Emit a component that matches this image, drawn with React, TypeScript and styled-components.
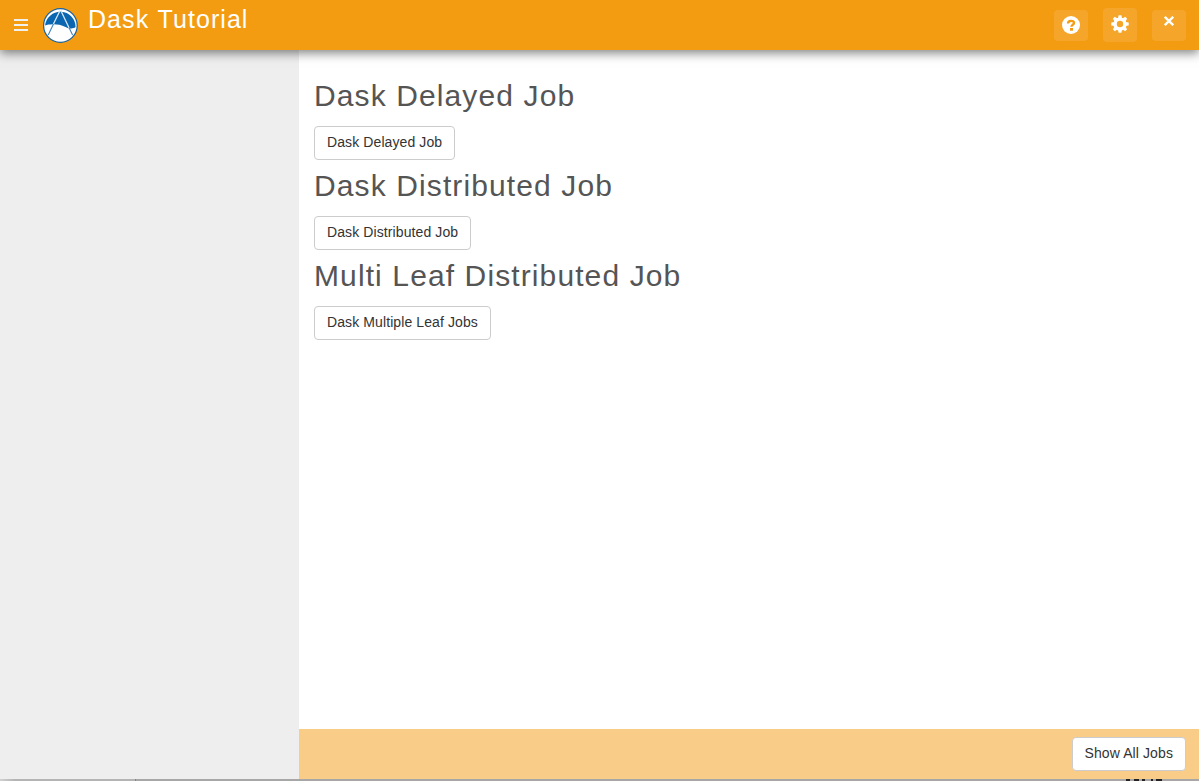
import React from 'react';
import styled, { createGlobalStyle } from 'styled-components';

const GlobalStyle = createGlobalStyle`
  * { box-sizing: border-box; }
  body {
    margin: 0;
    overflow: hidden;
    font-family: "Liberation Sans", Arial, sans-serif;
    font-size: 14px;
    color: #333;
    background: #fff;
  }
`;

const Window = styled.div`
  display: flex;
  flex-direction: column;
  width: 100%;
  height: 781px;
`;

const Header = styled.header`
  position: relative;
  z-index: 1;
  display: flex;
  flex: 0 0 50px;
  padding: 0 13px 0 14px;
  background: #f39c12;
  box-shadow: 0 3px 10px rgba(0, 0, 0, 0.5);
`;

const MenuButton = styled.div`
  display: flex;
  flex-direction: column;
  justify-content: space-between;
  width: 14px;
  height: 12px;
  margin-top: 19px;
`;

const MenuLine = styled.span`
  height: 2px;
  background: #f0f0ee;
`;

const Logo = styled.svg`
  width: 36px;
  height: 36px;
  margin: 7px 0 0 14px;
`;

const Title = styled.h1`
  flex: 1;
  margin: 5px 0 0 10px;
  font-size: 25px;
  font-weight: 400;
  line-height: 28px;
  letter-spacing: 1.06px;
  word-spacing: 0.8px;
  color: #fff;
`;

const Tools = styled.div`
  display: flex;
  align-items: center;
  gap: 15px;
`;

const ToolButton = styled.button<{ $height: number; $lift?: number }>`
  display: flex;
  align-items: center;
  justify-content: center;
  width: 34px;
  height: ${(p) => p.$height}px;
  padding: 0 0 ${(p) => p.$lift ?? 0}px;
  border: 0;
  border-radius: 4px;
  background: #f5a62a;
  color: #fff;
`;

const Body = styled.div`
  display: flex;
  flex: 1;
`;

const Sidebar = styled.aside`
  width: 299px;
  background: #eee;
`;

const Main = styled.main`
  display: flex;
  flex: 1;
  flex-direction: column;
`;

const Content = styled.section`
  flex: 1;
  padding: 29px 15px 0;
`;

const Job = styled.div`
  height: 90px;
`;

const JobTitle = styled.h2`
  margin: 0 0 14px;
  font-size: 30px;
  font-weight: 400;
  line-height: 33px;
  letter-spacing: 1.11px;
  color: #555;
`;

const Button = styled.button`
  display: block;
  height: 34px;
  padding: 5px 12px 7px;
  border: 1px solid #ccc;
  border-radius: 4px;
  background: #fff;
  font-family: inherit;
  font-size: 14px;
  line-height: 20px;
  letter-spacing: 0.1px;
  white-space: nowrap;
  color: #333;
`;

const Footer = styled.footer`
  display: flex;
  flex: 0 0 50px;
  justify-content: flex-end;
  padding: 8px 13px 0;
  background: #f9cd88;
`;

const BottomEdge = styled.div`
  display: flex;
  flex: 0 0 2px;
  background: #a7a7a7;
`;

const EdgeShade = styled.div`
  width: 136px;
  border-right: 1px solid #858585;
  background: linear-gradient(90deg, #d0d0d0, #b4b4b4 15px);
`;

const EdgeMarks = styled.svg`
  width: 40px;
  height: 2px;
  margin: 0 36px 0 auto;
`;

const jobs = [
  { title: 'Dask Delayed Job', action: 'Dask Delayed Job' },
  { title: 'Dask Distributed Job', action: 'Dask Distributed Job' },
  { title: 'Multi Leaf Distributed Job', action: 'Dask Multiple Leaf Jobs' },
];

const teeth = [0, 45, 90, 135, 180, 225, 270, 315];

const BrandMark = () => (
  <Logo viewBox="0 0 36 36">
    <circle cx="18.4" cy="18.5" r="17.4" fill="#1762a3" />
    <circle cx="18.4" cy="18.5" r="16.2" fill="#fff" />
    <path d="M3.1 18.4A15.3 15.3 0 0 1 33.6 20C31 22 27.5 21.8 23.5 19.9C19 17.6 14 17 10.5 17.2C7.5 17.4 5 17.6 3.1 18.4Z" fill="#0a66b0" />
    <path d="M17.8 4L6.2 28M19 4L30.6 28" stroke="#3f85bd" strokeWidth="1.1" fill="none" />
    <path d="M17.8 4L11.4 17.1M19 4L27 20.8" stroke="#dbe8f3" strokeWidth="1.2" fill="none" />
  </Logo>
);

const HelpIcon = () => (
  <svg width="18" height="18" viewBox="0 0 18 18">
    <circle cx="9" cy="9" r="9" fill="#fff" />
    <path d="M6 7.4C6 4.2 12 4 12 7C12 8.8 9.4 8.6 9.4 10.8" fill="none" stroke="#f39c12" strokeWidth="2.3" />
    <rect x="8" y="12" width="3" height="2.7" fill="#f39c12" />
  </svg>
);

const GearIcon = () => (
  <svg width="18" height="18" viewBox="0 0 18 18">
    {teeth.map((angle) => (
      <path key={angle} d="M6.9 4L7.6 .3H10.4L11.1 4Z" fill="#fff" transform={`rotate(${angle} 9 9)`} />
    ))}
    <circle cx="9" cy="9" r="4.9" fill="none" stroke="#fff" strokeWidth="3.4" />
  </svg>
);

const CloseIcon = () => (
  <svg width="10" height="10" viewBox="0 0 10 10">
    <path d="M.8 .8L9.2 9.2M9.2 .8L.8 9.2" stroke="#fff" strokeWidth="2.3" />
  </svg>
);

export default function App() {
  return (
    <>
      <GlobalStyle />
      <Window>
        <Header>
          <MenuButton>
            <MenuLine />
            <MenuLine />
            <MenuLine />
          </MenuButton>
          <BrandMark />
          <Title>Dask Tutorial</Title>
          <Tools>
            <ToolButton $height={31} aria-label="Help"><HelpIcon /></ToolButton>
            <ToolButton $height={34} $lift={2} aria-label="Settings"><GearIcon /></ToolButton>
            <ToolButton $height={31} $lift={9} aria-label="Close"><CloseIcon /></ToolButton>
          </Tools>
        </Header>
        <Body>
          <Sidebar />
          <Main>
            <Content>
              {jobs.map((job) => (
                <Job key={job.title}>
                  <JobTitle>{job.title}</JobTitle>
                  <Button>{job.action}</Button>
                </Job>
              ))}
            </Content>
            <Footer>
              <Button>Show All Jobs</Button>
            </Footer>
          </Main>
        </Body>
        <BottomEdge>
          <EdgeShade />
          <EdgeMarks viewBox="0 0 40 2">
            <path d="M3 1H7M11 1H16M19 1H22M28 1H30M33 1H39" stroke="#222" strokeWidth="2" />
          </EdgeMarks>
        </BottomEdge>
      </Window>
    </>
  );
}
